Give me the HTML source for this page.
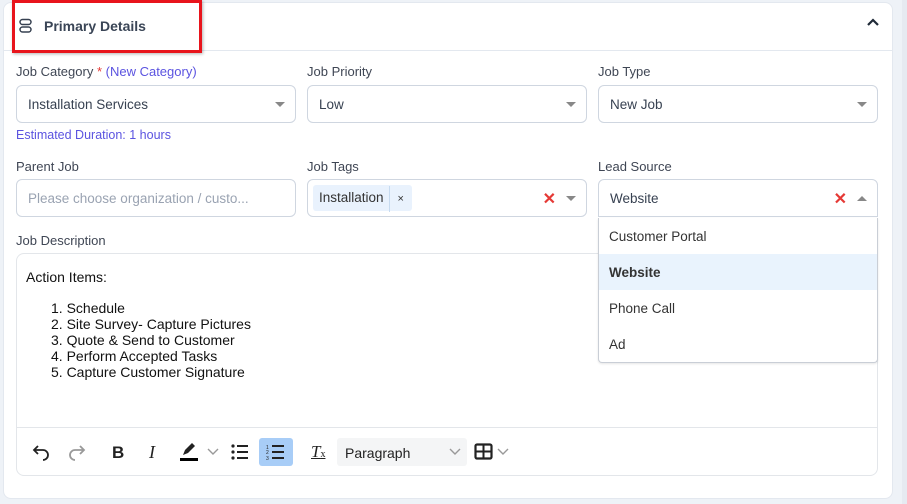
<!DOCTYPE html>
<html><head><style>
*{box-sizing:border-box;margin:0;padding:0}
body{width:907px;height:504px;background:#eef2f7;font-family:"Liberation Sans",Arial,sans-serif;position:relative;overflow:hidden;color:#374151}
.abs{position:absolute}
.card{left:3px;top:2px;width:890px;height:497px;background:#fff;border:1px solid #e3e8ef;border-radius:8px}
.hdr{left:3px;top:2px;width:890px;height:49px;border-bottom:1px solid #e3e8ef;border-radius:8px 8px 0 0}
.lbl{font-size:13px;color:#3f4654}
.inp{height:38px;border:1px solid #cfd6e0;border-radius:6px;background:#fff;font-size:13.5px;color:#374151;padding-left:11px;line-height:38px}
.caret{position:absolute;right:10px;top:16px;width:0;height:0;border-left:5px solid transparent;border-right:5px solid transparent;border-top:5px solid #888}
.x{position:absolute;color:#e53935;font-size:16px;font-weight:bold;top:0}
.dd{left:598px;top:218px;width:280px;height:145px;background:#fff;border:1px solid #c9ced6;border-top:none;border-radius:0 0 4px 4px;box-shadow:0 1px 2px rgba(0,0,0,.1)}
.opt{height:36px;line-height:38px;padding-left:10px;font-size:13.5px;color:#333}
.ed{font-family:"Liberation Sans",Arial,sans-serif;font-size:14px;color:#111;line-height:16px}
</style></head><body>
<div class="abs card"></div>
<div class="abs hdr"></div>
<svg class="abs" style="left:18px;top:18px" width="16" height="16" viewBox="0 0 16 16"><rect x="2" y="1.5" width="11" height="5" rx="2.5" fill="none" stroke="#374151" stroke-width="1.5"/><rect x="2" y="9" width="11" height="5" rx="2.5" fill="none" stroke="#374151" stroke-width="1.5"/></svg>
<div class="abs" style="left:44px;top:18px;font-size:14px;font-weight:bold;color:#3a4556">Primary Details</div>
<div class="abs" style="left:12px;top:0;width:190px;height:53px;border:3px solid #e8141c;box-shadow:1px 1px 3px rgba(0,0,0,.3)"></div>
<svg class="abs" style="left:866px;top:17px" width="14" height="10" viewBox="0 0 14 10"><path d="M2 8 L7 3 L12 8" fill="none" stroke="#1f2937" stroke-width="2.2"/></svg>

<div class="abs lbl" style="left:16px;top:64px">Job Category <span style="color:#e53935">*</span> <span style="color:#5b53e0">(New Category)</span></div>
<div class="abs lbl" style="left:307px;top:64px">Job Priority</div>
<div class="abs lbl" style="left:598px;top:64px">Job Type</div>
<div class="abs inp" style="left:16px;top:85px;width:280px">Installation Services<span class="caret"></span></div>
<div class="abs inp" style="left:307px;top:85px;width:280px">Low<span class="caret"></span></div>
<div class="abs inp" style="left:598px;top:85px;width:280px">New Job<span class="caret"></span></div>
<div class="abs" style="left:16px;top:128px;font-size:12.5px;color:#5b53e0">Estimated Duration: 1 hours</div>

<div class="abs lbl" style="left:16px;top:159px">Parent Job</div>
<div class="abs lbl" style="left:307px;top:159px">Job Tags</div>
<div class="abs lbl" style="left:598px;top:159px">Lead Source</div>
<div class="abs inp" style="left:16px;top:179px;width:280px;color:#9aa3b2">Please choose organization / custo...</div>
<div class="abs inp" style="left:307px;top:179px;width:280px;padding-left:5px;line-height:24px">
 <span style="position:absolute;left:5px;top:5px;height:26px;background:#e9f2fd;border-radius:3px;padding:0 0 0 6px;font-size:13.5px;line-height:26px;color:#333">Installation<span style="display:inline-block;border-left:1px solid #c7dbf0;margin-left:5px;padding:0 8px;font-size:11px">×</span></span>
 <span class="x" style="right:30px;top:8px">✕</span><span class="caret"></span></div>
<div class="abs inp" style="left:598px;top:179px;width:280px;border-radius:6px 6px 0 0">Website<span class="x" style="right:30px;top:1px">✕</span><span style="position:absolute;right:10px;top:16px;border-left:5px solid transparent;border-right:5px solid transparent;border-bottom:5px solid #888"></span></div>

<div class="abs lbl" style="left:16px;top:233px">Job Description</div>
<div class="abs" style="left:16px;top:253px;width:862px;height:223px;border:1px solid #e3e6ea;border-radius:8px"></div>
<div class="abs" style="left:17px;top:427px;width:860px;border-top:1px solid #e3e6ea"></div>
<div class="abs ed" style="left:26px;top:269px">Action Items:</div>
<div class="abs ed" style="left:51px;top:300px">1. Schedule<br>2. Site Survey- Capture Pictures<br>3. Quote &amp; Send to Customer<br>4. Perform Accepted Tasks<br>5. Capture Customer Signature</div>

<svg class="abs" style="left:31px;top:442px" width="20" height="20" viewBox="0 0 20 20"><path d="M7 4 L3 8 L7 12 M3 8 H12 A5 5 0 0 1 12 18" fill="none" stroke="#222" stroke-width="1.8"/></svg>
<svg class="abs" style="left:67px;top:442px" width="20" height="20" viewBox="0 0 20 20"><path d="M13 4 L17 8 L13 12 M17 8 H8 A5 5 0 0 0 8 18" fill="none" stroke="#999" stroke-width="1.8"/></svg>
<div class="abs" style="left:112px;top:443px;font-size:17px;font-weight:bold;color:#222">B</div>
<div class="abs" style="left:149px;top:442px;font-size:18px;font-style:italic;font-family:'Liberation Serif',serif;color:#222">I</div>
<svg class="abs" style="left:179px;top:441px" width="22" height="22" viewBox="0 0 22 22"><path d="M4 14 L6 9 L13 2 L16 5 L9 12 Z" fill="#222"/><rect x="1" y="17" width="18" height="3" fill="#000"/></svg>
<svg class="abs" style="left:207px;top:448px" width="12" height="8" viewBox="0 0 12 8"><path d="M1 1 L6 6 L11 1" fill="none" stroke="#999" stroke-width="1.4"/></svg>
<svg class="abs" style="left:230px;top:443px" width="20" height="18" viewBox="0 0 20 18"><g fill="#222"><circle cx="3" cy="3" r="1.6"/><circle cx="3" cy="9" r="1.6"/><circle cx="3" cy="15" r="1.6"/><rect x="7" y="2" width="11" height="2"/><rect x="7" y="8" width="11" height="2"/><rect x="7" y="14" width="11" height="2"/></g></svg>
<div class="abs" style="left:259px;top:438px;width:34px;height:28px;background:#a8cdf7;border-radius:3px"></div>
<svg class="abs" style="left:265px;top:443px" width="22" height="18" viewBox="0 0 22 18"><g fill="#222"><rect x="7" y="2" width="12" height="2"/><rect x="7" y="8" width="12" height="2"/><rect x="7" y="14" width="12" height="2"/></g><text x="1" y="6" font-size="5" fill="#222">1</text><text x="1" y="11" font-size="5" fill="#222">2</text><text x="1" y="17" font-size="5" fill="#222">3</text></svg>
<div class="abs" style="left:311px;top:442px;font-size:17px;font-style:italic;font-family:'Liberation Serif',serif;color:#222;text-decoration:underline">T<span style="font-size:10px;font-style:normal;text-decoration:none">x</span></div>
<div class="abs" style="left:337px;top:438px;width:130px;height:28px;background:#f4f5f6;border-radius:3px;font-size:14px;color:#222;padding-left:8px;line-height:30px">Paragraph</div>
<svg class="abs" style="left:449px;top:448px" width="12" height="8" viewBox="0 0 12 8"><path d="M1 1 L6 6 L11 1" fill="none" stroke="#999" stroke-width="1.4"/></svg>
<svg class="abs" style="left:474px;top:443px" width="20" height="18" viewBox="0 0 20 18"><rect x="1.5" y="1.5" width="16" height="14" rx="1.5" fill="none" stroke="#222" stroke-width="2.2"/><path d="M1.5 8.5 H17.5 M9.5 1.5 V15.5" stroke="#222" stroke-width="2"/></svg>
<svg class="abs" style="left:497px;top:448px" width="12" height="8" viewBox="0 0 12 8"><path d="M1 1 L6 6 L11 1" fill="none" stroke="#999" stroke-width="1.4"/></svg>

<div class="abs dd">
 <div class="opt">Customer Portal</div>
 <div class="opt" style="background:#e9f3fd;font-weight:bold">Website</div>
 <div class="opt">Phone Call</div>
 <div class="opt">Ad</div>
</div>
<div class="abs" style="left:902px;top:0;width:5px;height:504px;background:#e6eaf1"></div>
</body></html>
